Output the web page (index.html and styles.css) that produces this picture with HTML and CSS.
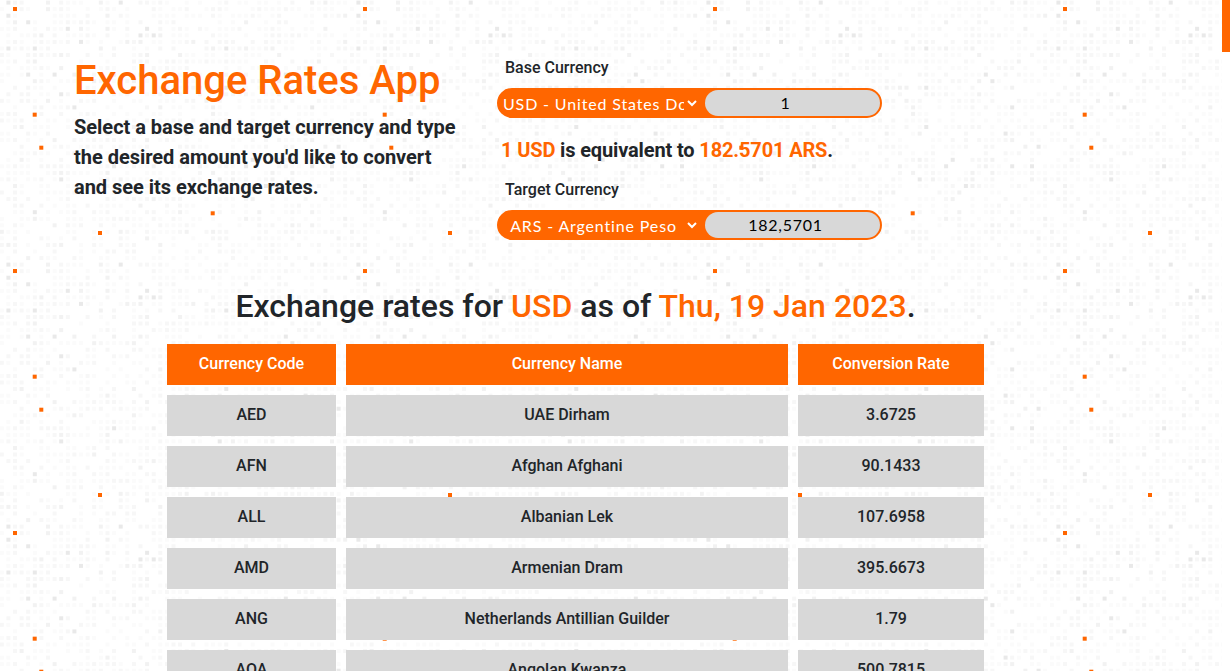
FILE: index.html
```html
<!DOCTYPE html>
<html lang="en">
<head>
<meta charset="UTF-8" />
<title>Exchange Rates App</title>
<link rel="stylesheet" href="styles.css">
</head>
<body>
  <div class="page" id="page">
    <div class="top">
      <div class="intro">
        <h1>Exchange Rates App</h1>
        <p>Select a base and target currency and type the desired amount you'd like to convert and see its exchange rates.</p>
      </div>
      <form class="converter">
        <label for="baseAmount">Base Currency</label>
        <div class="pill">
          <select class="pill-select">
            <option>USD - United States Dollar</option>
          </select>
          <input type="text" id="baseAmount" class="pill-input" value="1" />
        </div>
        <p class="result"><span class="hl">1 USD</span> is equivalent to <span class="hl">182.5701 ARS</span>.</p>
        <label for="targetAmount">Target Currency</label>
        <div class="pill">
          <select class="pill-select">
            <option>ARS - Argentine Peso</option>
          </select>
          <input type="text" id="targetAmount" class="pill-input" value="182,5701" />
        </div>
      </form>
    </div>

    <h2>Exchange rates for <span class="hl">USD</span> as of <span class="hl">Thu, 19 Jan 2023</span>.</h2>

    <table class="rates">
      <thead>
        <tr>
          <th class="col-code">Currency Code</th>
          <th class="col-name">Currency Name</th>
          <th class="col-rate">Conversion Rate</th>
        </tr>
      </thead>
      <tbody>
        <tr><td>AED</td><td>UAE Dirham</td><td>3.6725</td></tr>
        <tr><td>AFN</td><td>Afghan Afghani</td><td>90.1433</td></tr>
        <tr><td>ALL</td><td>Albanian Lek</td><td>107.6958</td></tr>
        <tr><td>AMD</td><td>Armenian Dram</td><td>395.6673</td></tr>
        <tr><td>ANG</td><td>Netherlands Antillian Guilder</td><td>1.79</td></tr>
        <tr><td>AOA</td><td>Angolan Kwanza</td><td>500.7815</td></tr>
      </tbody>
    </table>
  </div>
  <div class="scrollbar"><div class="thumb"></div></div>

<script src="dots.js"></script>
</body>
</html>
```

FILE: styles.css
```css
html, body { margin: 0; height: 100%; }
body { display: flex; height: 671px; overflow: hidden; background: white; font-family: Roboto, sans-serif; color: #212529; }

.page { flex: 1; min-width: 0; overflow: hidden; background-color: white; background-size: 350px 262px; }

.scrollbar { width: 8px; }
.thumb { height: 52px; background: #ff6600; }

.hl { color: #ff6600; }

.top { display: flex; padding: 56px 0 0 74px; height: 184px; }
.intro { width: 423px; }
h1 { margin: 1px 0 0; font-size: 40px; font-weight: 500; line-height: 48px; color: #ff6600; }
.intro p { margin: 7px 0 0; font-size: 20px; font-weight: 700; line-height: 30px; width: 390px; letter-spacing: -.02px; }

.converter { width: 385px; }
.converter label { display: block; margin-left: 8px; font-size: 16px; font-weight: 500; line-height: 24px; }
.pill { display: flex; height: 30px; margin-top: 8px; border-radius: 15px; background: #ff6600; box-sizing: border-box; border: 2px solid #ff6600; }
.pill-select { width: 201px; margin-right: 5px; padding: 0; border: none; outline: none; background: #ff6600; color: white; font-family: Lato, sans-serif; font-size: 16px; letter-spacing: .85px; text-align: center; border-radius: 13px 0 0 13px; }
.pill-input { flex: 1; min-width: 0; padding: 0 14px 2px 0; border: none; outline: none; background: #d8d8d8; color: black; font-family: Lato, sans-serif; font-size: 16px; letter-spacing: .75px; text-align: center; border-radius: 13px; }
.result { margin: 18px 0 14px 4px; font-size: 20px; font-weight: 700; line-height: 28px; letter-spacing: -.14px; }

h2 { margin: 46px 0 0; width: 1151px; text-align: center; font-size: 32px; font-weight: 500; line-height: 40px; }

.rates { margin: 8px 0 0 157px; width: 837px; table-layout: fixed; border-collapse: separate; border-spacing: 10px; }
.rates th, .rates td { height: 41px; padding: 0 0 2px; box-sizing: border-box; text-align: center; font-size: 16px; font-weight: 500; }
.rates th { background: #ff6600; color: white; }
.rates td { background: #d8d8d8; }
.col-code { width: 169px; }
.col-name { width: 442px; }
.col-rate { width: 186px; }
```

FILE: dots.js
```js
// Builds the speckled background tile (53 x 40 cells), same tile every load
let seed = 7321;
function rnd() {
  seed = (seed * 16807) % 2147483647;
  return seed / 2147483647;
}

const cols = 53, rows = 40, tileW = 350, tileH = 262;
const stepX = tileW / cols, stepY = tileH / rows;
const orange = [[15, 9], [34.7, 114.7], [41.3, 147.7], [100, 233], [212.7, 213.3]];

let rects = "";
for (let r = 0; r < rows; r++) {
  for (let c = 0; c < cols; c++) {
    const v = rnd();
    if (v < 0.42) continue;
    let shade = "#fbfbfb";
    if (v > 0.75) shade = "#f7f7f7";
    if (v > 0.93) shade = "#f2f2f2";
    if (v > 0.985) shade = "#e9e9e9";
    const x = (15 - 2 * stepX + c * stepX - 2).toFixed(1);
    const y = (2.6 + r * stepY - 2).toFixed(1);
    rects += `<rect x='${x}' y='${y}' width='4' height='4' fill='${shade}'/>`;
  }
}
orange.forEach(d => {
  rects += `<rect x='${d[0] - 2}' y='${d[1] - 2}' width='4' height='4' fill='#ff6600'/>`;
});

const svg = `<svg xmlns='http://www.w3.org/2000/svg' width='${tileW}' height='${tileH}'>${rects}</svg>`;
document.getElementById("page").style.backgroundImage = `url("data:image/svg+xml,${encodeURIComponent(svg)}")`;
```
